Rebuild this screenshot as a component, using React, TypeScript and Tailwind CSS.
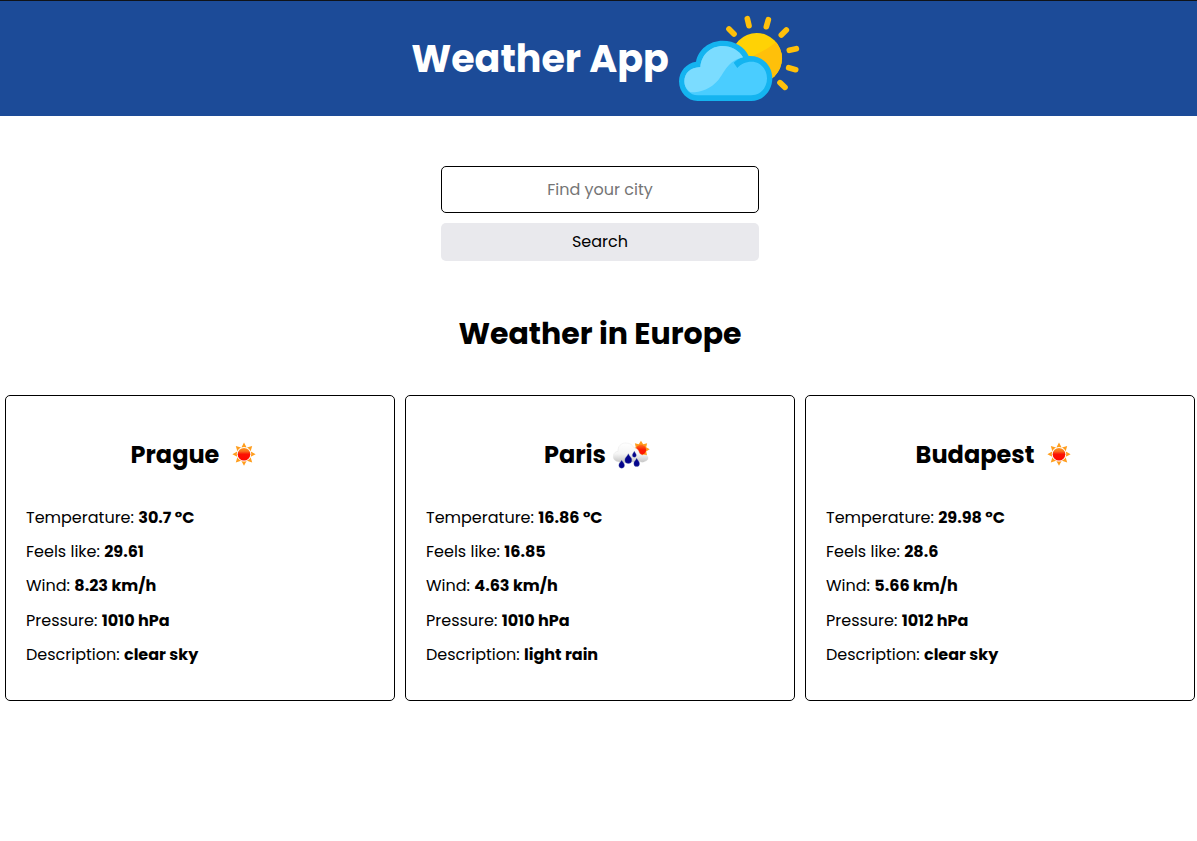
type City = {
  name: string;
  icon: "sun" | "rain";
  temperature: string;
  feelsLike: string;
  wind: string;
  pressure: string;
  description: string;
};

const cities: City[] = [
  {
    name: "Prague",
    icon: "sun",
    temperature: "30.7 °C",
    feelsLike: "29.61",
    wind: "8.23 km/h",
    pressure: "1010 hPa",
    description: "clear sky",
  },
  {
    name: "Paris",
    icon: "rain",
    temperature: "16.86 °C",
    feelsLike: "16.85",
    wind: "4.63 km/h",
    pressure: "1010 hPa",
    description: "light rain",
  },
  {
    name: "Budapest",
    icon: "sun",
    temperature: "29.98 °C",
    feelsLike: "28.6",
    wind: "5.66 km/h",
    pressure: "1012 hPa",
    description: "clear sky",
  },
];

const rayAngles = [0, 45, 90, 135, 180, 225, 270, 315];

function SunIcon() {
  return (
    <svg className="size-[50px]" viewBox="0 0 50 50" aria-hidden="true">
      <defs>
        <linearGradient id="sunBody" x1="0" y1="0" x2="0" y2="1">
          <stop offset="0" stopColor="#ff9a1e" />
          <stop offset="0.28" stopColor="#f96a1c" />
          <stop offset="0.5" stopColor="#fb1204" />
          <stop offset="1" stopColor="#ff0a00" />
        </linearGradient>
      </defs>
      {rayAngles.map((a) => (
        <path key={a} d="M25 13.6 L27.6 18.4 Q25 17.4 22.4 18.4 Z" fill="#ff9d1c" transform={`rotate(${a} 25 25.2)`} />
      ))}
      <circle cx="25" cy="25.2" r="6.3" fill="url(#sunBody)" />
    </svg>
  );
}

function RainIcon() {
  return (
    <svg className="size-[50px]" viewBox="17 -3 150 150" aria-hidden="true">
      <defs>
        <linearGradient id="cloudBody" x1="0" y1="0" x2="0" y2="1">
          <stop offset="0" stopColor="#ffffff" />
          <stop offset="0.55" stopColor="#f5f5f5" />
          <stop offset="1" stopColor="#c4c4c4" />
        </linearGradient>
        <linearGradient id="sunSmall" x1="0" y1="0" x2="0" y2="1">
          <stop offset="0" stopColor="#ff7a1c" />
          <stop offset="0.5" stopColor="#fb1c04" />
          <stop offset="1" stopColor="#ff1500" />
        </linearGradient>
      </defs>
      {rayAngles.map((a) => (
        <path key={a} d="M122 32 L130 45 H114 Z" fill="#ff9d1c" transform={`rotate(${a} 122 58)`} />
      ))}
      <circle cx="122" cy="59" r="15.5" fill="url(#sunSmall)" />
      <path
        d="M54 95 C43 94 38 86 39 77 C40 69 46 64 53 64 C52 50 61 39 76 39 C89 39 97 45 101 54 C108 52 115 59 117 69 C123 76 128 77 136 75 C146 78 146 90 135 94 C128 98 120 97 115 93 C107 98 97 98 91 94 C80 99 63 99 54 95 Z"
        fill="url(#cloudBody)"
        stroke="#dedede"
        strokeWidth="1"
      />
      <g fill="#04048c" stroke="#5b6da8" strokeWidth="1">
        <path d="M64 91 C67 97 72.5 99 72.5 106 A8.5 8.5 0 0 1 55.5 106 C55.5 99 61 97 64 91 Z" />
        <path d="M84 71 C87 79 94.5 82 94.5 90 A10.5 10.5 0 0 1 73.5 90 C73.5 82 81 79 84 71 Z" />
        <path d="M102 64 C104 69 108 71 108 76 A6 6 0 0 1 96 76 C96 71 100 69 102 64 Z" />
        <path d="M109 85 C112 92 117.5 94 117.5 101 A8.5 8.5 0 0 1 100.5 101 C100.5 94 106 92 109 85 Z" />
      </g>
    </svg>
  );
}

function LogoIcon() {
  return (
    <svg className="h-[86px] w-[121px] shrink-0" viewBox="27 30 363 258" aria-hidden="true">
      <defs>
        <clipPath id="sunClip">
          <circle cx="260" cy="160" r="76" />
        </clipPath>
      </defs>
      <circle cx="260" cy="160" r="76" fill="#ffd205" />
      <path d="M204 192 C235 150 280 145 318 111 L350 111 V250 H204 Z" fill="#ffc00a" clipPath="url(#sunClip)" />
      <g stroke="#ffc00a" strokeWidth="17" strokeLinecap="round">
        <path d="M177 72 L192 87" />
        <path d="M232 41 L237 62" />
        <path d="M295 44 L289 65" />
        <path d="M349 75 L334 90" />
        <path d="M379 131 L358 136" />
        <path d="M356 188 L377 194" />
        <path d="M330 233 L345 247" />
      </g>
      <path
        d="M83 288 C52 288 27 262 27 229 C27 199 50 174 78 170 C85 133 118 107 158 107 C194 107 224 125 236 153 C276 150 307 182 307 220 C307 258 279 288 244 288 Z"
        fill="#14b4f0"
      />
      <path
        d="M83 271 C60 271 43 252 43 229 C43 205 61 187 91 186 C94 150 121 123 158 123 C184 123 207 136 219 157 C207 160 199 166 191 173 L202 189 C211 178 226 170 245 170 C271 170 291 192 291 220 C291 249 271 271 244 271 Z"
        fill="#4acdff"
      />
      <path
        d="M62 262 C49 254 43 242 43 229 C43 205 61 187 91 186 C94 150 121 123 158 123 C184 123 207 136 219 157 C172 168 165 201 145 225 C122 252 94 262 62 262 Z"
        fill="#7bdcff"
      />
    </svg>
  );
}

function Reading({ label, value }: { label: string; value: string }) {
  return (
    <p className="h-[34.25px] leading-[34.25px] whitespace-nowrap">
      {label}: <strong>{value}</strong>
    </p>
  );
}

function CityCard({ city }: { city: City }) {
  return (
    <article className="h-[306px] rounded-[5px] border border-black px-5 pt-[33px]">
      <h3 className="flex h-[50px] items-center justify-center text-2xl leading-[36px] font-bold">
        <span className="pt-px">{city.name}</span>
        {city.icon === "sun" ? <SunIcon /> : <RainIcon />}
      </h3>
      <div className="mt-[21.9px]">
        <Reading label="Temperature" value={city.temperature} />
        <Reading label="Feels like" value={city.feelsLike} />
        <Reading label="Wind" value={city.wind} />
        <Reading label="Pressure" value={city.pressure} />
        <Reading label="Description" value={city.description} />
      </div>
    </article>
  );
}

export default function App() {
  return (
    <div className="min-h-screen overflow-hidden bg-white font-['Poppins','Inter',sans-serif] text-base text-black">
      <header className="flex h-[116px] justify-center border-t border-[#101318] bg-[#1c4b98] pl-[14px]">
        <h1 className="mt-[29px] mr-[10px] text-[38px] leading-[58px] font-bold text-white">Weather App</h1>
        <div className="pt-[14px]">
          <LogoIcon />
        </div>
      </header>
      <main className="w-[1200px]">
        <form className="mx-auto flex w-[318px] flex-col gap-2.5 pt-[50px]" onSubmit={(e) => e.preventDefault()}>
          <input
            className="h-[47px] rounded-[5px] border border-black text-center outline-none placeholder:text-[#757575]"
            placeholder="Find your city"
          />
          <button className="h-[38px] rounded-[5px] bg-[#e9e9ed]">Search</button>
        </form>
        <h2 className="mt-[48.5px] text-center text-[30px] leading-[48px] font-bold">Weather in Europe</h2>
        <section className="mt-[37.5px] grid grid-cols-3 gap-2.5 px-[5px]">
          {cities.map((c) => (
            <CityCard key={c.name} city={c} />
          ))}
        </section>
      </main>
    </div>
  );
}
